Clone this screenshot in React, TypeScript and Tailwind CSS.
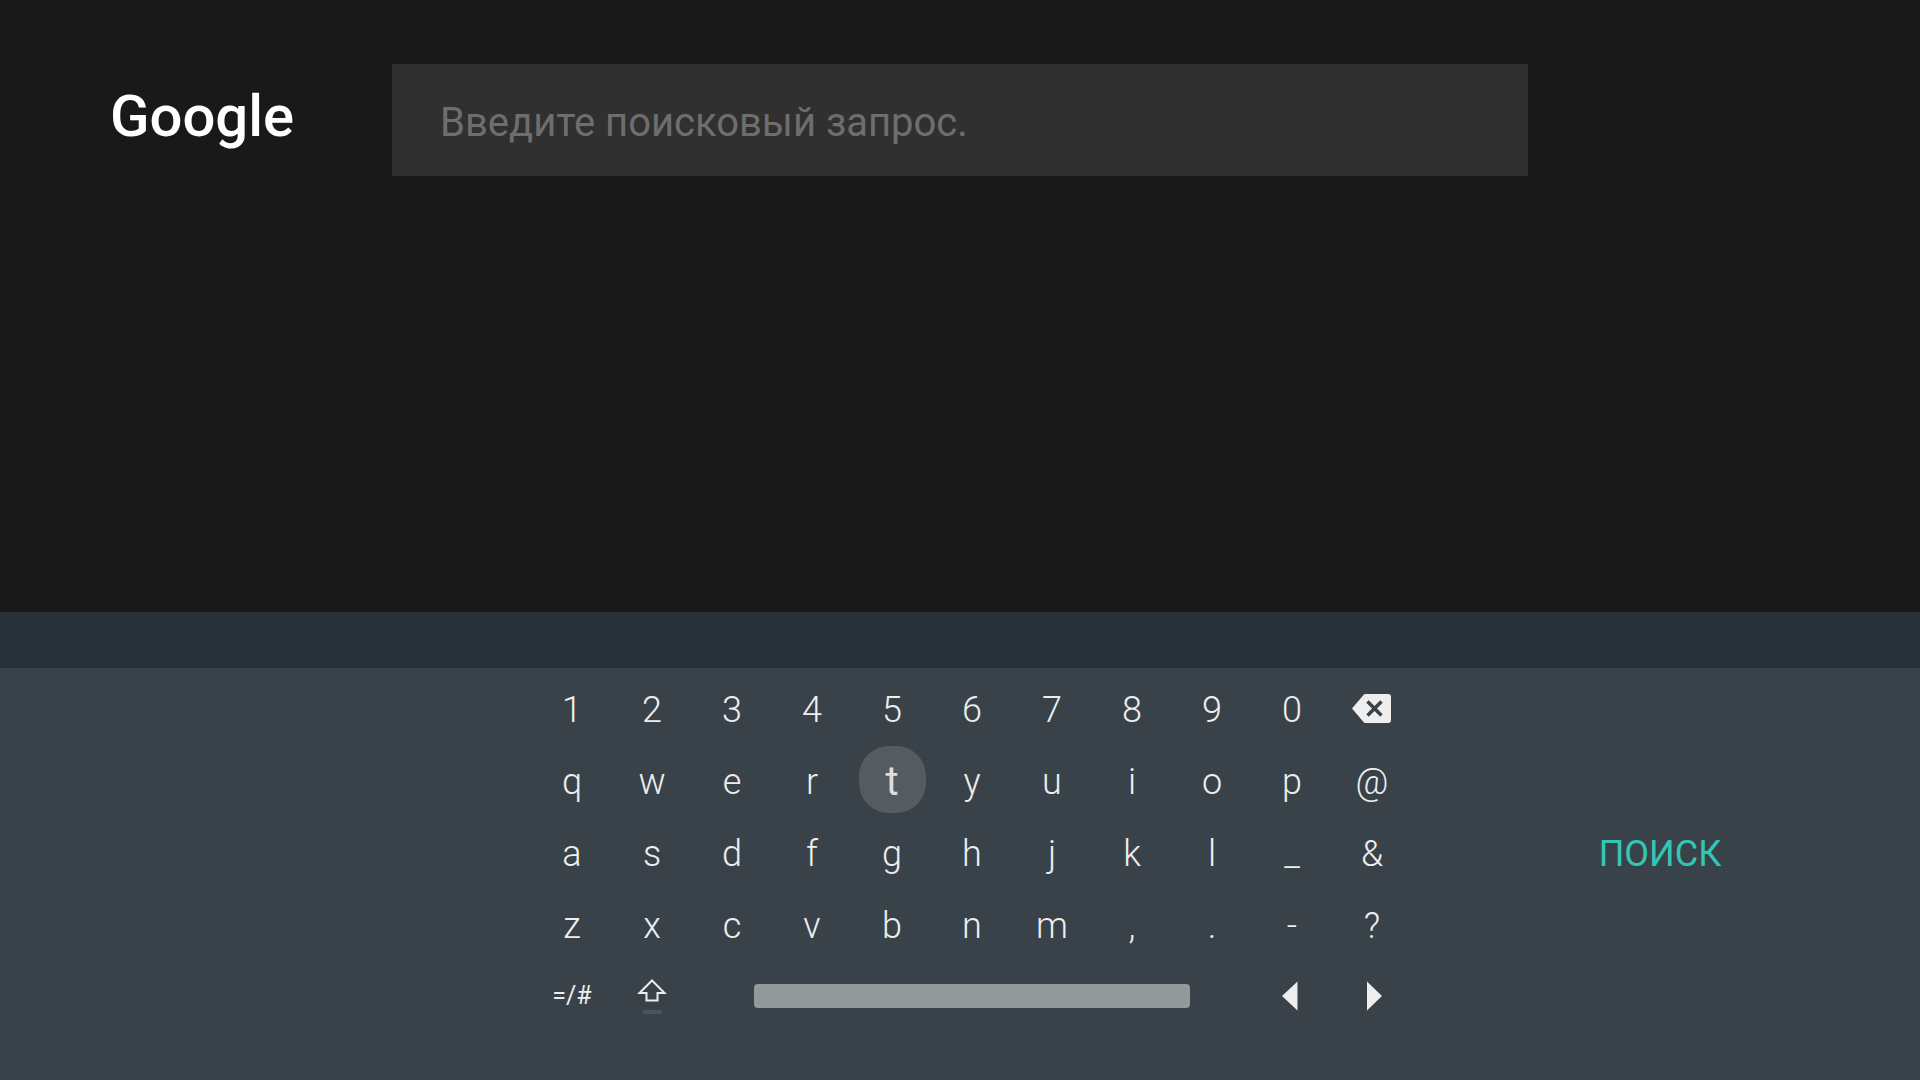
import { useState } from "react";
import clsx from "clsx";

const ROWS = [
  ["1", "2", "3", "4", "5", "6", "7", "8", "9", "0", "backspace"],
  ["q", "w", "e", "r", "t", "y", "u", "i", "o", "p", "@"],
  ["a", "s", "d", "f", "g", "h", "j", "k", "l", "_", "&"],
  ["z", "x", "c", "v", "b", "n", "m", ",", ".", "-", "?"],
];

export default function App() {
  const [query, setQuery] = useState("");
  const [focused, setFocused] = useState("t");

  function press(key: string) {
    setFocused(key);
    setQuery(key === "backspace" ? query.slice(0, -1) : query + key);
  }

  return (
    <div className="min-h-screen flex flex-col bg-[#191919] font-[Roboto,sans-serif]">
      <SearchBar query={query} setQuery={setQuery} />
      <div className="mt-auto h-14 bg-[#263238]" />
      <section className="grid grid-cols-[1fr_880px_1fr] items-center bg-[#3a4249] text-[#eeeeee] pl-6 pt-1.5 pb-[46px]">
        <div className="col-start-2">
          {ROWS.map((row) => (
            <div key={row[0]} className="grid grid-cols-11">
              {row.map((key) => (
                <Key
                  key={key}
                  value={key}
                  active={key === focused}
                  onPress={() => press(key)}
                />
              ))}
            </div>
          ))}
          <BottomRow onSpace={() => press(" ")} />
        </div>
        <div className="flex justify-center pr-3">
          <button className="text-4xl leading-[72px] text-[#32c7b5]">
            ПОИСК
          </button>
        </div>
      </section>
    </div>
  );
}

function SearchBar({
  query,
  setQuery,
}: {
  query: string;
  setQuery: (value: string) => void;
}) {
  return (
    <header className="grid grid-cols-[392px_1fr_392px] items-center pt-16">
      <h1 className="pl-[110px] pb-2 text-[58px] leading-none font-medium text-white">
        Google
      </h1>
      <input
        aria-label="Введите поисковый запрос."
        placeholder="Введите поисковый запрос."
        className="w-full h-28 pl-12 pr-6 pt-1 text-[40px] bg-[#303030] text-[#eeeeee] placeholder:text-[#6e6e6e] outline-none"
        value={query}
        onChange={(e) => setQuery(e.currentTarget.value)}
      />
    </header>
  );
}

function Key({
  value,
  active,
  onPress,
}: {
  value: string;
  active: boolean;
  onPress: () => void;
}) {
  const isBackspace = value === "backspace";
  return (
    <button
      onClick={onPress}
      aria-label={value}
      className={clsx(
        "h-18 flex items-center justify-center text-4xl font-light",
        isBackspace && "pb-1",
        active && "pb-1.5"
      )}
    >
      {isBackspace ? (
        <BackspaceIcon />
      ) : (
        <span
          className={clsx(
            active &&
              "size-[67px] pt-1.5 flex items-center justify-center rounded-[30px] bg-[#545b61] text-[40px] font-normal text-[#dddddd]"
          )}
        >
          {value}
        </span>
      )}
    </button>
  );
}

function BottomRow({ onSpace }: { onSpace: () => void }) {
  return (
    <div className="h-18 pb-1 grid grid-cols-11 items-center">
      <button className="text-[25px]">=/#</button>
      <button aria-label="Shift" className="flex justify-center">
        <ShiftIcon />
      </button>
      <button
        aria-label="Space"
        onClick={onSpace}
        className="col-start-3 col-span-7 mx-[62px] h-6 rounded-sm bg-[#93999b]"
      />
      <button aria-label="Left" className="flex justify-center">
        <svg width="40" height="40" viewBox="0 0 40 40" fill="currentColor">
          <path d="M25.500 5.500v29L10 20z" />
        </svg>
      </button>
      <button aria-label="Right" className="flex justify-center">
        <svg width="40" height="40" viewBox="0 0 40 40" fill="currentColor">
          <path d="M15 5.500v29L30 20z" />
        </svg>
      </button>
    </div>
  );
}

function BackspaceIcon() {
  return (
    <svg width="40" height="30" viewBox="0 0 40 30">
      <path
        d="M13.500 1H36a3 3 0 0 1 3 3V27a3 3 0 0 1-3 3H13.500Q12.300 30 11.500 29L0 15.500L11.500 2Q12.300 1 13.500 1z"
        fill="currentColor"
      />
      <path d="M15.500 8.500l14 14M29.500 8.500l-14 14" stroke="#3a4249" strokeWidth="3.500" />
    </svg>
  );
}

function ShiftIcon() {
  return (
    <svg width="32" height="36" viewBox="0 0 32 36" fill="none">
      <path
        d="M16 2.500L3.500 15H10.500V22.500H21.500V15H28.500z"
        stroke="currentColor"
        strokeWidth="2"
      />
      <rect x="7" y="32" width="19" height="4" rx="1" fill="#4c545b" />
    </svg>
  );
}
